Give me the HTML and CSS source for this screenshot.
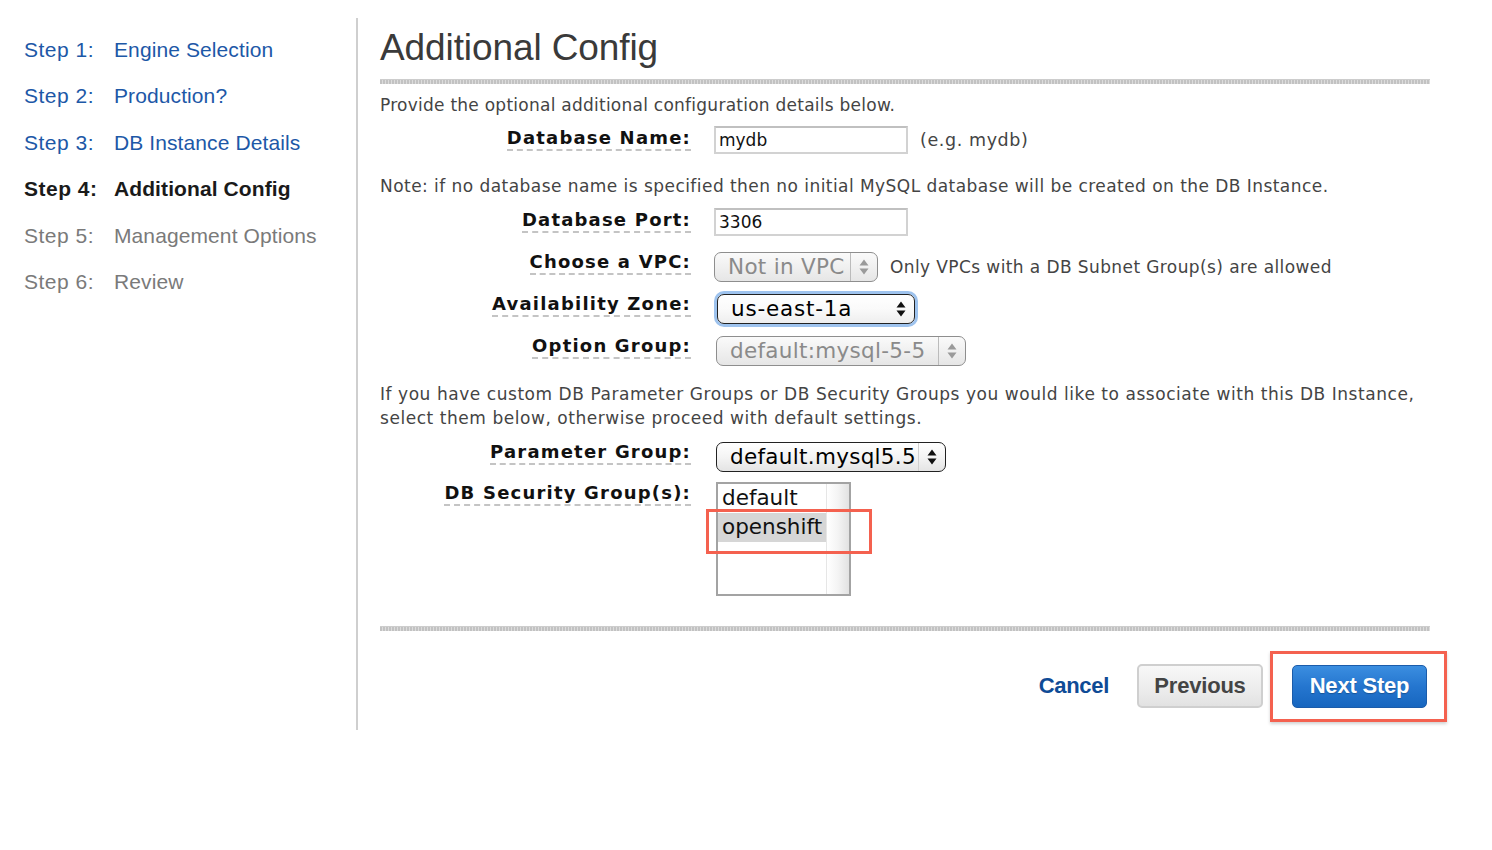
FILE: index.html
```html
<!DOCTYPE html>
<html>
<head>
<meta charset="utf-8">
<title>Additional Config</title>
<link rel="stylesheet" href="styles.css">
</head>
<body>
<div class="page">
  <nav class="steps">
    <div class="step done"><span class="num">Step 1:</span><span class="name">Engine Selection</span></div>
    <div class="step done"><span class="num">Step 2:</span><span class="name">Production?</span></div>
    <div class="step done"><span class="num">Step 3:</span><span class="name">DB Instance Details</span></div>
    <div class="step current"><span class="num">Step 4:</span><span class="name">Additional Config</span></div>
    <div class="step todo"><span class="num">Step 5:</span><span class="name">Management Options</span></div>
    <div class="step todo"><span class="num">Step 6:</span><span class="name">Review</span></div>
  </nav>
  <main class="main">
    <h1 class="title">Additional Config</h1>
    <div class="sep"></div>
    <p class="text intro">Provide the optional additional configuration details below.</p>
    <div class="row r-name">
      <label class="lbl"><span>Database Name:</span></label>
      <div class="ctl"><span class="input w-name">mydb</span><span class="hint">(e.g. mydb)</span></div>
    </div>
    <p class="text note">Note: if no database name is specified then no initial MySQL database will be created on the DB Instance.</p>
    <div class="row r-port">
      <label class="lbl"><span>Database Port:</span></label>
      <div class="ctl"><span class="input w-port">3306</span></div>
    </div>
    <div class="row r-vpc">
      <label class="lbl"><span>Choose a VPC:</span></label>
      <div class="ctl">
        <span class="select disabled w-vpc"><span class="val">Not in VPC</span><span class="arr"><svg width="10" height="16" viewBox="0 0 10 16"><path d="M5 0.5 L9.5 6.5 L0.5 6.5 Z M0.5 9.5 L9.5 9.5 L5 15.5 Z"/></svg></span></span>
        <span class="hint vpc-hint">Only VPCs with a DB Subnet Group(s) are allowed</span>
      </div>
    </div>
    <div class="row r-az">
      <label class="lbl"><span>Availability Zone:</span></label>
      <div class="ctl">
        <span class="select focus w-az"><span class="val">us-east-1a</span><span class="arr noline"><svg width="10" height="16" viewBox="0 0 10 16"><path d="M5 0.5 L9.5 6.5 L0.5 6.5 Z M0.5 9.5 L9.5 9.5 L5 15.5 Z"/></svg></span></span>
      </div>
    </div>
    <div class="row r-opt">
      <label class="lbl"><span>Option Group:</span></label>
      <div class="ctl">
        <span class="select disabled w-opt"><span class="val">default:mysql-5-5</span><span class="arr"><svg width="10" height="16" viewBox="0 0 10 16"><path d="M5 0.5 L9.5 6.5 L0.5 6.5 Z M0.5 9.5 L9.5 9.5 L5 15.5 Z"/></svg></span></span>
      </div>
    </div>
    <p class="text para">If you have custom DB Parameter Groups or DB Security Groups you would like to associate with this DB Instance,<br>select them below, otherwise proceed with default settings.</p>
    <div class="row r-param">
      <label class="lbl"><span>Parameter Group:</span></label>
      <div class="ctl">
        <span class="select w-param"><span class="val">default.mysql5.5</span><span class="arr"><svg width="10" height="16" viewBox="0 0 10 16"><path d="M5 0.5 L9.5 6.5 L0.5 6.5 Z M0.5 9.5 L9.5 9.5 L5 15.5 Z"/></svg></span></span>
      </div>
    </div>
    <div class="row r-sec">
      <label class="lbl"><span>DB Security Group(s):</span></label>
      <div class="ctl">
        <div class="listbox">
          <div class="items">
            <div class="item">default</div>
            <div class="item sel">openshift</div>
          </div>
          <div class="scroll"></div>
          <div class="mark"></div>
        </div>
      </div>
    </div>
    <div class="sep sep2"></div>
    <div class="actions">
      <a class="cancel">Cancel</a>
      <button class="btn prev">Previous</button>
      <div class="hl"><button class="btn next">Next Step</button></div>
    </div>
  </main>
</div>
</body>
</html>
```

FILE: styles.css
```css
html, body {
  margin: 0;
  padding: 0;
  background: #fff;
}
body {
  font-family: "DejaVu Sans", Verdana, sans-serif;
  color: #444;
}
.page {
  display: flex;
  align-items: stretch;
  margin-top: 18px;
}
.steps {
  width: 332px;
  padding: 9px 0 0 24px;
  border-right: 2px solid #cfcfcf;
  flex: none;
  font-family: "Liberation Sans", Arial, sans-serif;
  font-size: 21px;
}
.step {
  display: flex;
  line-height: 46.4px;
  height: 46.4px;
}
.step .num {
  width: 90px;
  flex: none;
  letter-spacing: 0.5px;
}
.step .name { letter-spacing: 0.1px; }
.step.done { color: #1d58a7; }
.step.current { color: #1a1a1a; font-weight: bold; }
.step.todo { color: #7a7a7a; }

.main {
  width: 1050px;
  padding: 0 0 22px 22px;
}
.title {
  margin: 8px 0 0;
  font-family: "Liberation Sans", Arial, sans-serif;
  font-weight: normal;
  font-size: 37px;
  line-height: 44px;
  color: #3a3a3a;
  letter-spacing: -0.1px;
}
.sep {
  margin-top: 9px;
  height: 4px;
  background:
    repeating-linear-gradient(90deg, #c2c2c2 0 2px, #dcdcdc 2px 3px);
  border-top: 1px solid #cdcdcd;
}
.text {
  margin: 0;
  font-size: 17px;
  letter-spacing: 0.38px;
  line-height: 22px;
  color: #444;
}
.intro { margin-top: 10px; letter-spacing: 0.25px; }
.note { margin-top: 21px; letter-spacing: 0.45px; }
.para { margin-top: 16px; line-height: 24px; letter-spacing: 0.55px; }

.row {
  display: grid;
  grid-template-columns: 310px 1fr;
  column-gap: 24px;
  align-items: center;
}
.lbl {
  text-align: right;
  font-weight: bold;
  font-size: 18px;
  letter-spacing: 1.2px;
  color: #111;
  line-height: 22px;
}
.lbl span {
  display: inline-block;
  border-bottom: 2px dashed #c4c4c4;
  margin-right: -1px;
}
.ctl {
  display: flex;
  align-items: center;
}
.hint {
  font-size: 17.5px;
  letter-spacing: 0.6px;
  color: #444;
  margin-left: 12px;
}
.vpc-hint {
  font-size: 17px;
  letter-spacing: 0.4px;
  margin-left: 12px;
}
.input {
  box-sizing: border-box;
  display: inline-block;
  height: 28px;
  border: 2px solid #d2d2d2;
  border-top-color: #c0c0c0;
  padding: 0 5px 0 3px;
  font-size: 17px;
  line-height: 24px;
  color: #111;
  background: #fff;
}
.w-name { width: 194px; }
.w-port { width: 194px; }

.r-name { margin-top: 10px; }
.r-port { margin-top: 11px; }
.r-vpc { margin-top: 16px; }
.r-az { margin-top: 12px; }
.r-opt { margin-top: 12px; }
.r-param { margin-top: 12px; }
.r-sec { margin-top: 10px; align-items: start; }
.r-sec .lbl { margin-top: 0; }
.r-name .lbl, .r-port .lbl { margin-top: -2px; }
.r-vpc .lbl, .r-az .lbl, .r-opt .lbl, .r-param .lbl { margin-top: -9px; }

.select {
  box-sizing: border-box;
  display: inline-flex;
  align-items: center;
  height: 30px;
  border: 1.5px solid #222;
  border-radius: 7px;
  background: linear-gradient(#ffffff, #f4f4f4 50%, #e4e4e4);
  font-size: 21.5px;
  color: #000;
  padding-left: 13px;
}
.select .val {
  flex: 1;
  line-height: 26px;
  white-space: nowrap;
  letter-spacing: 0.3px;
}
.select .arr {
  flex: none;
  width: 26px;
  height: 100%;
  display: flex;
  align-items: center;
  justify-content: center;
  border-left: 1px solid #d0d0d0;
}
.select .arr.noline { border-left: none; }
.select .arr svg { fill: #111; }
.select.disabled {
  border-color: #8e8e8e;
  color: #8a8a8a;
  background: linear-gradient(#fafafa, #f0f0f0 50%, #e6e6e6);
}
.select.disabled .arr { border-left-color: #bbb; }
.select.disabled .arr svg { fill: #9a9a9a; }
.select.focus {
  box-shadow: 0 0 0 3px #9ec3ee;
  margin-left: 3px;
  background: linear-gradient(#ffffff, #fafafa 50%, #eeeeee);
}
.select.focus .val { letter-spacing: 0.8px; }
.w-vpc { width: 164px; }
.w-az { width: 198px; }
.w-opt { width: 250px; margin-left: 2px; }
.w-param { width: 230px; margin-left: 2px; }

.listbox {
  position: relative;
  box-sizing: border-box;
  margin-left: 2px;
  width: 135px;
  height: 114px;
  border: 2px solid #a3a3a3;
  display: flex;
  background: #fff;
}
.items {
  flex: 1;
  font-size: 21.5px;
  color: #111;
}
.item {
  height: 29px;
  line-height: 28px;
  padding-left: 4px;
}
.item.sel { background: #d6d6d6; }
.scroll {
  width: 22px;
  flex: none;
  border-left: 1px solid #e6e6e6;
  background: linear-gradient(90deg, #ffffff, #f4f4f4 50%, #e2e2e2);
}
.mark {
  position: absolute;
  left: -12px;
  top: 25px;
  width: 160px;
  height: 39px;
  border: 3px solid #f4614f;
}

.sep2 { margin-top: 30px; }

.actions {
  margin-top: 33px;
  display: flex;
  justify-content: flex-end;
  align-items: center;
  font-family: "Liberation Sans", Arial, sans-serif;
}
.cancel {
  font-weight: bold;
  font-size: 22px;
  color: #0f4b96;
  letter-spacing: -0.3px;
  margin-right: 28px;
  cursor: pointer;
}
.btn {
  font-family: "Liberation Sans", Arial, sans-serif;
  font-weight: bold;
  font-size: 22px;
  height: 44px;
  border-radius: 5px;
  letter-spacing: -0.2px;
  cursor: pointer;
  padding: 0;
}
.prev {
  width: 126px;
  color: #444;
  border: 2px solid #cfcfcf;
  background: linear-gradient(#f8f8f8, #ececec 60%, #e2e2e2);
}
.hl {
  margin: -14px -17px -14px 7px;
  padding: 11px 17px 11px 19px;
  border: 3px solid #f4614f;
  box-shadow: 0 2px 3px rgba(0, 0, 0, 0.18);
  background: #fff;
}
.next {
  display: block;
  width: 135px;
  height: 43px;
  color: #fff;
  border: 1px solid #1b5caa;
  background: linear-gradient(#3b8ee0, #2576cf 50%, #1766bf);
  text-shadow: 0 1px 1px rgba(0, 0, 0, 0.25);
}
```
